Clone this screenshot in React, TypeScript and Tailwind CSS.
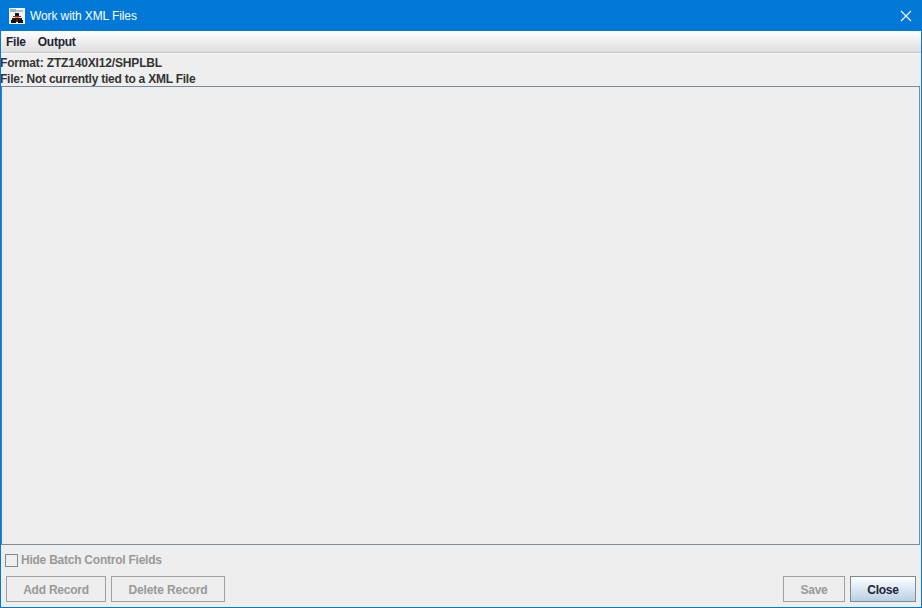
export default function App() {
  const font = { fontFamily: '"Liberation Sans", Arial, sans-serif' };

  return (
    <div
      className="w-[922px] h-[608px] flex flex-col overflow-hidden bg-[#eeeeee] border-x border-b border-[#0078d7] text-[12px] text-[#333333] font-bold tracking-[-0.24px]"
      style={font}
    >
      {/* Title bar */}
      <div className="h-[31px] shrink-0 -mx-px flex items-center bg-[#0078d7] pl-[9px] pr-[10px]">
        <svg width="16" height="16" viewBox="0 0 16 16" className="shrink-0">
          <rect width="16" height="16" fill="#f6f6f6" />
          <rect x="1" y="1" width="6" height="3" fill="#8fb4dc" />
          <rect x="7" y="2" width="7" height="2" fill="#a9c0da" />
          <rect x="6" y="5" width="4" height="3" fill="#1a1a1a" />
          <rect x="4" y="8" width="8" height="1" fill="#c8141e" />
          <rect x="6" y="9" width="4" height="1" fill="#d8a020" />
          <rect x="3" y="10" width="10" height="2" fill="#2a1a12" />
          <rect x="2" y="12" width="5" height="3" fill="#111111" />
          <rect x="9" y="12" width="5" height="3" fill="#111111" />
          <rect x="7" y="12" width="2" height="2" fill="#6a2a1a" />
        </svg>
        <span className="ml-[5px] text-[12px] font-normal tracking-[-0.1px] text-white">Work with XML Files</span>
        <svg width="12" height="12" viewBox="0 0 12 12" className="ml-auto" fill="none" stroke="#ffffff" strokeWidth="1.1">
          <path d="M1 1 L11 11 M11 1 L1 11" />
        </svg>
      </div>

      {/* Menu bar */}
      <div className="h-[22px] shrink-0 flex items-center gap-[12px] pl-[5px] pt-px bg-gradient-to-b from-[#ffffff] to-[#dedede] border-b border-[#c6c6c6] text-[#222233]">
        <span>File</span>
        <span>Output</span>
      </div>

      {/* Format info */}
      <div className="shrink-0 leading-[16px] border-t border-[#f8f8f8] -ml-px pt-px -mb-px">
        <div className="tracking-[-0.16px]">Format: ZTZ140XI12/SHPLBL</div>
        <div>File: Not currently tied to a XML File</div>
      </div>

      {/* Empty table area */}
      <div className="flex-1 min-h-0 mr-px border border-[#7a8a99] border-l-[#3d7fc0]" />

      {/* Bottom controls */}
      <div className="h-[62px] shrink-0 flex flex-col text-[#999999]">
        <label className="flex items-center mt-[8px] ml-[4px] gap-[3px] h-[14px]">
          <span className="w-[13px] h-[13px] border border-[#7a8a99] bg-[#eeeeee]" />
          <span>Hide Batch Control Fields</span>
        </label>
        <div className="flex items-center mt-[9px] pl-[5px] pr-[5px]">
          <button className="w-[100px] h-[26px] pt-px border border-[#a0a0a0] bg-[#eeeeee] font-bold text-[#999999]">
            Add Record
          </button>
          <button className="ml-[5px] w-[114px] h-[26px] pt-px border border-[#a0a0a0] bg-[#eeeeee] font-bold tracking-[-0.12px] text-[#999999]">
            Delete Record
          </button>
          <button className="ml-auto w-[62px] h-[26px] pt-px border border-[#a0a0a0] bg-[#eeeeee] font-bold text-[#999999]">
            Save
          </button>
          <button className="ml-[5px] w-[66px] h-[26px] pt-px border border-[#7a8a99] bg-gradient-to-b from-[#ffffff] to-[#b8cfe5] font-bold text-[#222233]">
            Close
          </button>
        </div>
      </div>
    </div>
  );
}
